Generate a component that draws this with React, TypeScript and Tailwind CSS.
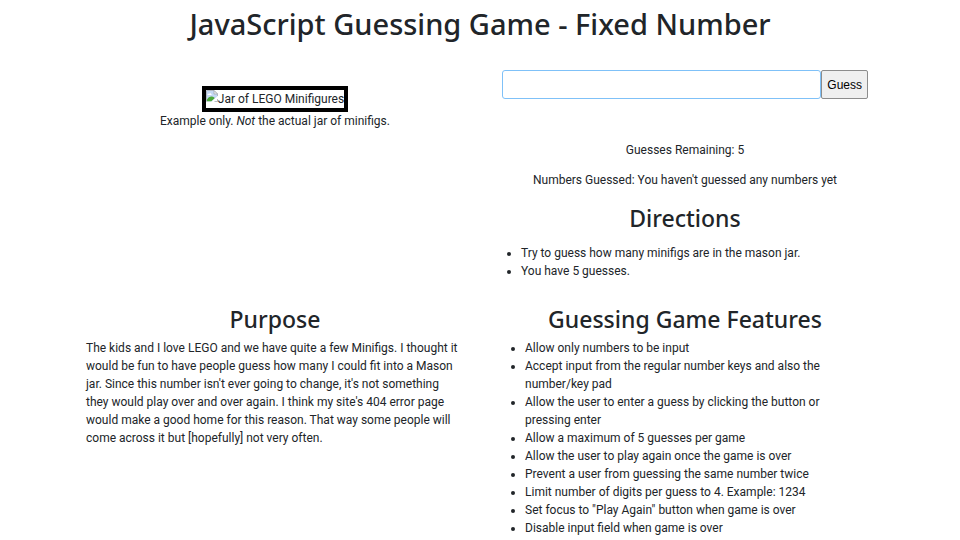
import { useState } from "react";

const directions = [
  "Try to guess how many minifigs are in the mason jar.",
  "You have 5 guesses.",
];

const features = [
  "Allow only numbers to be input",
  "Accept input from the regular number keys and also the number/key pad",
  "Allow the user to enter a guess by clicking the button or pressing enter",
  "Allow a maximum of 5 guesses per game",
  "Allow the user to play again once the game is over",
  "Prevent a user from guessing the same number twice",
  "Limit number of digits per guess to 4. Example: 1234",
  'Set focus to "Play Again" button when game is over',
  "Disable input field when game is over",
];

function SectionTitle({ children }: { children: string }) {
  return (
    <h2 className="text-center font-['Noto_Sans',sans-serif] text-[23px] leading-[29px] font-medium">
      {children}
    </h2>
  );
}

function MissingImageIcon() {
  return (
    <svg viewBox="0 0 12 12" className="h-3 w-3 shrink-0" aria-hidden="true">
      <path d="M0.5 0.5h7.5l3.5 3.5v3L6.5 11.5h-6z" fill="#c5d8f4" />
      <path d="M1.5 5c0-1.2 1-1.6 1.6-1.2C3.600 2.800 5.200 3.200 5.200 4.200c.8 0 .8.8.3.8z" fill="#fff" />
      <path d="M0.800 11.200V9.800C2 7.500 4 6.300 6 6.500c1 .1 2 .6 2.800 1.400L5.500 11.200z" fill="#4ba83a" />
      <path d="M5.200 11.800L11.800 6v1.800L7.500 11.800z" fill="#fff" />
      <path d="M0.500 11.500v-11h7.500l3.500 3.500v2" fill="none" stroke="#a3a9b3" strokeWidth="0.8" />
      <path d="M8 0.500v3.500h3.500z" fill="#f2f2f2" stroke="#a3a9b3" strokeWidth="0.8" />
      <path d="M8.500 11.500h3v-2.500" fill="none" stroke="#a3a9b3" strokeWidth="0.8" />
    </svg>
  );
}

function GuessForm() {
  const [guess, setGuess] = useState("");

  return (
    <form className="flex" onSubmit={(e) => e.preventDefault()}>
      <input
        type="text"
        aria-label="Your guess"
        maxLength={4}
        value={guess}
        onChange={(e) => setGuess(e.target.value.replace(/\D/g, ""))}
        className="h-[29px] min-w-0 flex-1 rounded-[3px] border border-[#7fc1f8] bg-white px-2 outline-none"
      />
      <button
        type="submit"
        className="h-[29px] rounded-[2px] border border-[#8c8c8c] bg-[#efefef] px-[5px] font-['Liberation_Sans',sans-serif] text-[12px] text-black"
      >
        Guess
      </button>
    </form>
  );
}

export default function App() {
  return (
    <main className="bg-white font-[Roboto,sans-serif] text-[12px] leading-[18px] text-[#212529]">
      <h1 className="pt-[6px] text-center font-['Noto_Sans',sans-serif] text-[29px] leading-[36px] font-medium">
        JavaScript Guessing Game - Fixed Number
      </h1>

      <div className="mx-auto mt-7 grid max-w-[820px] grid-cols-2">
        <section className="px-4 pt-4 text-center">
          <figure>
            <div className="inline-flex items-start border-4 border-black align-top">
              <MissingImageIcon />
              <span>Jar of LEGO Minifigures</span>
            </div>
            <figcaption>
              Example only. <em>Not</em> the actual jar of minifigs.
            </figcaption>
          </figure>
        </section>

        <section className="px-[22px]">
          <GuessForm />
          <p className="mt-[42px] text-center">Guesses Remaining: 5</p>
          <p className="mt-3 mb-[15px] text-center">
            Numbers Guessed: You haven't guessed any numbers yet
          </p>
          <SectionTitle>Directions</SectionTitle>
          <ul className="mt-[11px] list-disc pl-[19px]">
            {directions.map((item) => (
              <li key={item}>{item}</li>
            ))}
          </ul>
        </section>

        <section className="mt-[25px] px-4">
          <SectionTitle>Purpose</SectionTitle>
          <p className="mt-[5px]">
            The kids and I love LEGO and we have quite a few Minifigs. I thought it would be fun to
            have people guess how many I could fit into a Mason jar. Since this number isn't ever
            going to change, it's not something they would play over and over again. I think my
            site's 404 error page would make a good home for this reason. That way some people will
            come across it but [hopefully] not very often.
          </p>
        </section>

        <section className="mt-[25px] px-4">
          <SectionTitle>Guessing Game Features</SectionTitle>
          <ul className="mt-[5px] list-disc pr-8 pl-[29px]">
            {features.map((item) => (
              <li key={item}>{item}</li>
            ))}
          </ul>
        </section>
      </div>
    </main>
  );
}
